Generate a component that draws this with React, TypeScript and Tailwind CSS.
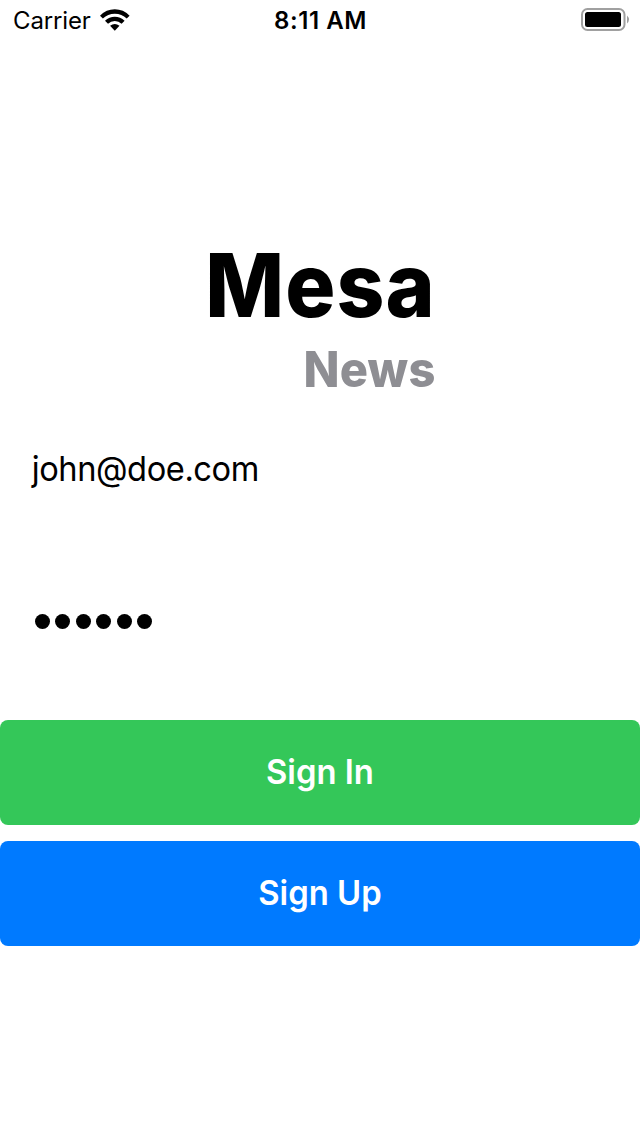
export default function App() {
  return (
    <div className="flex h-[1136px] w-[640px] flex-col overflow-hidden bg-white font-['Inter',sans-serif] text-black">
      <header className="grid h-10 grid-cols-3 items-start pr-[10px] pl-[13px]">
        <div className="flex items-start gap-[9px]">
          <span className="pt-px text-[24px] leading-10 tracking-[-0.15px]">Carrier</span>
          <svg className="mt-[9px]" width="30" height="22" viewBox="0 0 30 22">
            <path d="M0 6.700Q6.200 0.300 14.800 0.300T29.600 6.700L26.700 9.600Q21.800 4.700 14.800 4.700T2.900 9.600Z" />
            <path d="M5 11.700Q9.200 7.700 14.800 7.700T24.600 11.700L21.600 14.700Q18.700 12 14.800 12T8 14.700Z" />
            <path d="M10.100 16.800Q14.800 13.300 19.500 16.800L14.800 21.800Z" />
          </svg>
        </div>
        <span className="pt-px pr-[2px] text-center text-[24px] leading-10 font-semibold tracking-[0.55px]">8:11 AM</span>
        <svg className="mt-2 justify-self-end" width="49" height="23" viewBox="0 0 49 23">
          <rect x="1" y="1" width="42.500" height="21" rx="5.500" fill="none" stroke="#a0a0a0" strokeWidth="2" />
          <rect x="4" y="4" width="36" height="15" rx="2.500" fill="black" />
          <path d="M46 7.500q4 4 0 8z" fill="#a0a0a0" />
        </svg>
      </header>
      <main className="flex flex-col pt-[191px]">
        <div className="flex w-[436px] flex-col items-end">
          <h1 className="h-[109px] origin-right scale-x-[0.95] text-[88px] leading-[108px] font-extrabold tracking-[1.2px]">Mesa</h1>
          <h2 className="h-[60px] origin-right scale-x-[0.96] text-[49px] leading-[60px] font-extrabold tracking-[0.2px] text-[#8e8e93]">News</h2>
        </div>
        <div className="mt-[39px] h-[60px] origin-left scale-x-[0.96] pl-[33px] text-[34px] leading-[60px] tracking-[-0.45px]">john@doe.com</div>
        <div className="mt-[115px] flex gap-[5.400px] pl-[35px]">
          {[0, 1, 2, 3, 4, 5].map((dot) => (
            <span key={dot} className="size-[15px] shrink-0 rounded-full bg-black" />
          ))}
        </div>
        <button className="mt-[91px] h-[105px] rounded-lg bg-[#34c759] pb-px text-[34px] font-semibold text-white">
          <span className="inline-block scale-x-[0.965] pb-px">Sign In</span>
        </button>
        <button className="mt-4 h-[105px] rounded-lg bg-[#007aff] pb-px text-[34px] font-semibold text-white">
          <span className="inline-block scale-x-[0.965] pb-px">Sign Up</span>
        </button>
      </main>
    </div>
  );
}
